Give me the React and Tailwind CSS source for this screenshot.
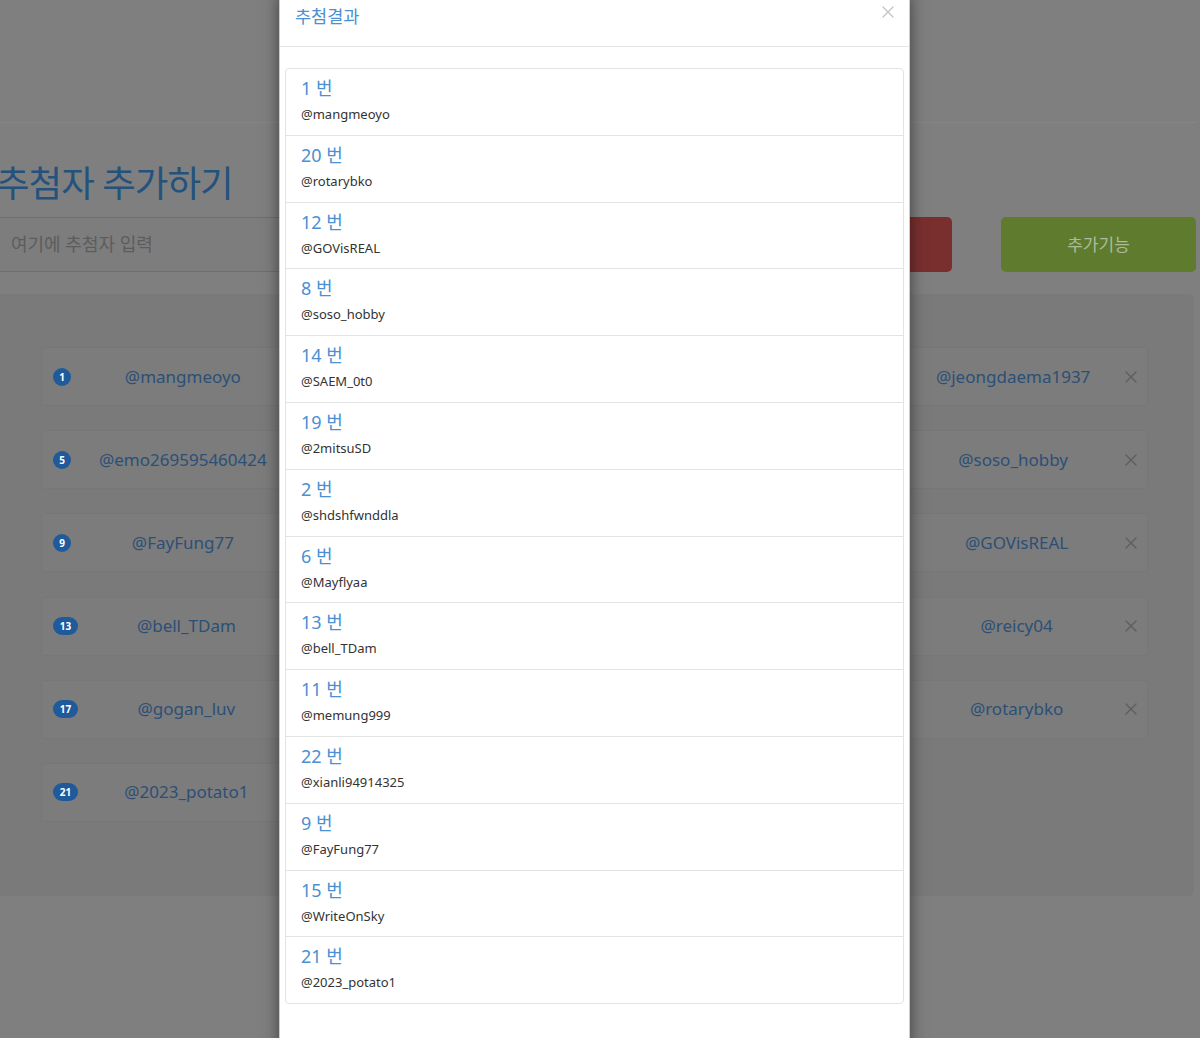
import React from "react";

const FONT = { fontFamily: '"Noto Sans", "Noto Sans CJK KR", sans-serif' };

const entrants = [
  "mangmeoyo", "shdshfwnddla", "hanbyeol_03", "jeongdaema1937",
  "emo269595460424", "Mayflyaa", "dalbit_k", "soso_hobby",
  "FayFung77", "yeoreum22", "memung999", "GOVisREAL",
  "bell_TDam", "SAEM_0t0", "WriteOnSky", "reicy04",
  "gogan_luv", "pado_pado", "2mitsuSD", "rotarybko",
  "2023_potato1", "xianli94914325",
];

const winners = [1, 20, 12, 8, 14, 19, 2, 6, 13, 11, 22, 9, 15, 21];

function XIcon({ className, width = 1.6 }) {
  return (
    <svg viewBox="0 0 12 12" className={className} fill="none" stroke="currentColor" strokeWidth={width} strokeLinecap="round">
      <path d="M1 1l10 10M11 1L1 11" />
    </svg>
  );
}

function EntrantCard({ n, name }) {
  const wide = n >= 10;
  return (
    <div className="h-[59px] flex items-center pl-[11px] pr-[10px] bg-[#7c7c7c] border border-[#777777] rounded-[3px]">
      <span
        className={`h-[18px] ${wide ? "w-[25px]" : "w-[18px]"} rounded-full bg-[#1f5a9b] text-white text-[10px] font-bold leading-[18px] text-center shrink-0`}
      >
        {n}
      </span>
      <span className="flex-1 text-center text-[17px] leading-[24px] text-[#2c4f76] whitespace-nowrap">@{name}</span>
      <XIcon className="w-[12px] h-[12px] text-[#5e5e5e] shrink-0" width={1.4} />
    </div>
  );
}

function ResultModal() {
  return (
    <div className="absolute left-[279px] top-[-10px] w-[631px] h-[1060px] bg-white border border-black/20 shadow-[0_5px_15px_rgba(0,0,0,0.5)]">
      <div className="flex items-start justify-between pt-[14px] pb-[18px] pl-[15px] pr-[15px] border-b border-[#e5e5e5]">
        <h4 className="text-[17.5px] leading-[23px] text-[#4a90d2]">추첨결과</h4>
        <XIcon className="w-[12px] h-[12px] mt-[1px] text-[#c4c4c4]" width={1.3} />
      </div>
      <div className="pt-[21px] px-[5px]">
        <ul>
          {winners.map((n, i) => (
            <li
              key={n}
              className={`-mb-px border border-[#e3e3e3] pl-[15px] pt-[9px] pb-[10.8px] ${i === 0 ? "rounded-t-[4px]" : ""} ${i === winners.length - 1 ? "rounded-b-[4px]" : ""}`}
            >
              <div className="text-[18px] leading-[20px] text-[#4a90d2]">{n} 번</div>
              <div className="mt-[6px] text-[13px] leading-[20px] text-[#333333]">@{entrants[n - 1]}</div>
            </li>
          ))}
        </ul>
      </div>
    </div>
  );
}

export default function App() {
  return (
    <div className="relative h-[1038px] overflow-hidden bg-[#7f7f7f]" style={FONT}>
      <div className="-ml-[15px] w-[1212px]">
        <div className="h-[123px] border-b border-[#858585]" />
        <h1 className="mt-[40px] pl-[11px] text-[36.5px] leading-[40px] tracking-[-1px] text-[#24527d] whitespace-nowrap">추첨자 추가하기</h1>
        <div className="mt-[14px] flex gap-[49px] h-[55px]">
          <div className="flex-1 flex items-center pl-[26px] bg-[#7d7d7d] border-y border-[#6e6e6e]">
            <span className="text-[18px] text-[#5c5c5c]">여기에 추첨자 입력</span>
          </div>
          <div className="w-[195px] rounded-[5px] bg-[#7a2f2f]" />
          <div className="w-[195px] mr-[1px] rounded-[5px] bg-[#5f7b2d] flex items-center justify-center">
            <span className="text-[17px] text-[#adbb9c]">추가기능</span>
          </div>
        </div>
        <div className="mt-[22px] h-[602px] mr-[3px] rounded-[6px] bg-[#7a7a7a] pt-[53px] pl-[56px]">
          <div className="w-[1107px] grid grid-cols-4 gap-y-[24.2px]">
            {entrants.map((name, i) => (
              <EntrantCard key={name} n={i + 1} name={name} />
            ))}
          </div>
        </div>
      </div>
      <ResultModal />
    </div>
  );
}
